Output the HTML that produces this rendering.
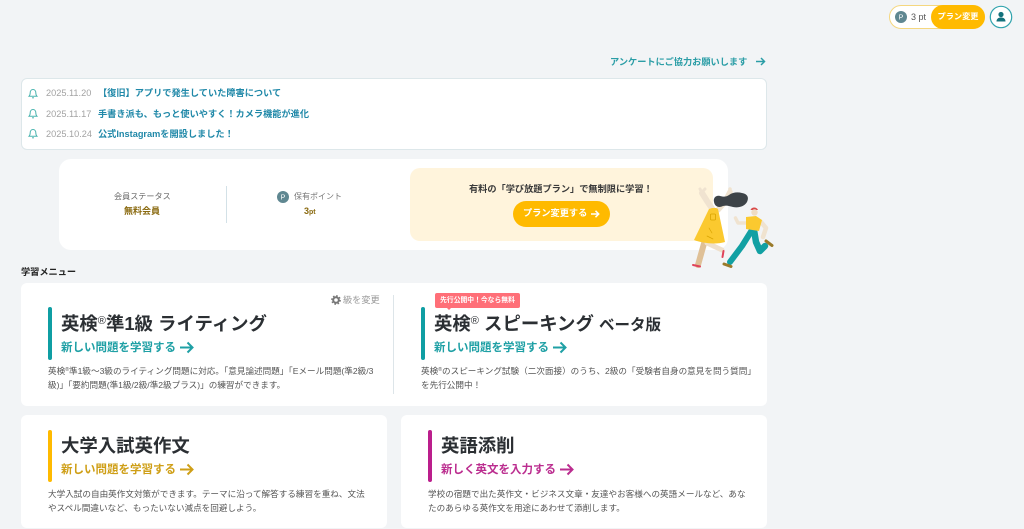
<!DOCTYPE html>
<html lang="ja"><head><meta charset="utf-8"><style>
*{box-sizing:border-box;margin:0;padding:0}
html,body{width:1024px;height:529px;overflow:hidden;background:#f2f4f6}
body{position:relative;font-family:"Liberation Sans","Noto Sans CJK JP",sans-serif;color:#333}
.a{position:absolute;white-space:nowrap}
.card{position:absolute;background:#fff;border-radius:6px}
.bar{position:absolute;width:4px;border-radius:2px}
.h{position:absolute;white-space:nowrap;font-size:18.4px;font-weight:700;color:#2b2f33;line-height:24px}
.l{position:absolute;white-space:nowrap;font-size:11.5px;font-weight:700;line-height:18px}
.d{position:absolute;white-space:nowrap;font-size:8.6px;line-height:14px;color:#555}
.dt{position:absolute;left:46px;font-size:9.2px;color:#a3a3a3;line-height:14px}
.nt{position:absolute;white-space:nowrap;font-size:9.2px;font-weight:700;color:#1f88a8;line-height:14px}
sup{font-size:.6em;line-height:0;vertical-align:.55em;font-weight:400}
svg{position:absolute;overflow:visible}
</style></head><body>

<!-- header -->
<div class="a" style="left:889px;top:5px;width:96px;height:24px;background:#fff;border:1px solid #f5d77f;border-radius:12px"></div>
<svg style="left:895px;top:11px" width="12" height="12"><circle cx="6" cy="6" r="6" fill="#5f8791"/><text x="6" y="8.5" font-size="7" fill="#fff" text-anchor="middle" font-family="Liberation Sans">P</text></svg>
<div class="a" style="left:911px;top:10px;font-size:9px;line-height:14px;color:#555">3 pt</div>
<div class="a" style="left:931px;top:5px;width:54px;height:24px;background:#ffba00;border-radius:12px;color:#fff;font-size:8.2px;font-weight:700;text-align:center;line-height:24px">プラン変更</div>
<svg style="left:989px;top:5px" width="24" height="24" viewBox="0 0 24 24"><circle cx="12" cy="12" r="10.7" fill="#fff" stroke="#2fa3ad" stroke-width="1.2"/><circle cx="12" cy="9.5" r="2.6" fill="#14727c"/><path d="M7.500 16.500c0-2.800 2-4 4.500-4s4.500 1.200 4.500 4z" fill="#14727c"/></svg>

<!-- survey -->
<div class="a" style="left:610px;top:54.500px;font-size:9.2px;font-weight:700;color:#2a9da6;line-height:15px">アンケートにご協力お願いします</div>
<svg style="left:755px;top:56px" width="11" height="11" viewBox="0 0 11 11" fill="none" stroke="#2a9da6" stroke-width="1.500"><path d="M1 5.500h8.500M6 2l3.500 3.500L6 9"/></svg>

<!-- notices -->
<div class="card" style="left:21px;top:78px;width:746px;height:72px;border:1px solid #dde7ea"></div>
<svg style="left:28px;top:88px" width="10" height="11" viewBox="0 0 10 11" fill="none" stroke="#4cb5b0" stroke-width="1"><path d="M1 8.300c1-1 1.200-1.800 1.200-3.500C2.200 3 3.300 1.500 5 1.500s2.800 1.500 2.800 3.300c0 1.700.2 2.500 1.200 3.500z"/><path d="M4 9.800h2"/></svg>
<svg style="left:28px;top:108px" width="10" height="11" viewBox="0 0 10 11" fill="none" stroke="#4cb5b0" stroke-width="1"><path d="M1 8.300c1-1 1.200-1.800 1.200-3.500C2.200 3 3.300 1.500 5 1.500s2.800 1.500 2.800 3.300c0 1.700.2 2.500 1.200 3.500z"/><path d="M4 9.800h2"/></svg>
<svg style="left:28px;top:128px" width="10" height="11" viewBox="0 0 10 11" fill="none" stroke="#4cb5b0" stroke-width="1"><path d="M1 8.300c1-1 1.200-1.800 1.200-3.500C2.200 3 3.300 1.500 5 1.500s2.800 1.500 2.800 3.300c0 1.700.2 2.500 1.200 3.500z"/><path d="M4 9.800h2"/></svg>
<div class="dt" style="top:86px">2025.11.20</div>
<div class="dt" style="top:106.500px">2025.11.17</div>
<div class="dt" style="top:127px">2025.10.24</div>
<div class="nt" style="left:98px;top:86px">【復旧】アプリで発生していた障害について</div>
<div class="nt" style="left:98px;top:106.500px">手書き派も、もっと使いやすく！カメラ機能が進化</div>
<div class="nt" style="left:98px;top:127px">公式Instagramを開設しました！</div>

<!-- status -->
<div class="card" style="left:59px;top:159px;width:669px;height:91px;border-radius:12px"></div>
<div class="a" style="left:114px;top:190px;font-size:8.1px;line-height:13px;color:#666">会員ステータス</div>
<div class="a" style="left:124px;top:204px;font-size:9px;font-weight:700;line-height:14px;color:#8a6a10">無料会員</div>
<div class="a" style="left:226px;top:186px;width:1px;height:37px;background:#d3e1e7"></div>
<svg style="left:277px;top:191px" width="12" height="12"><circle cx="6" cy="6" r="6" fill="#5f8791"/><text x="6" y="8.500" font-size="7" fill="#fff" text-anchor="middle" font-family="Liberation Sans">P</text></svg>
<div class="a" style="left:294px;top:190px;font-size:8px;line-height:13px;color:#777">保有ポイント</div>
<div class="a" style="left:304px;top:204px;font-size:9px;font-weight:700;line-height:14px;color:#8a6a10">3<span style="font-size:7px">pt</span></div>
<div class="a" style="left:410px;top:168px;width:303px;height:73px;background:#fff4dc;border-radius:10px"></div>
<div class="a" style="left:469px;top:182px;font-size:9.2px;font-weight:700;line-height:15px;color:#3a3a3a">有料の「学び放題プラン」で無制限に学習！</div>
<div class="a" style="left:513px;top:201px;width:97px;height:26px;background:#ffba00;border-radius:13px"></div>
<div class="a" style="left:523px;top:206px;font-size:9.2px;font-weight:700;line-height:15px;color:#fff">プラン変更する</div>
<svg style="left:590px;top:208.500px" width="10" height="10" viewBox="0 0 10 10" fill="none" stroke="#fff" stroke-width="1.500"><path d="M1 5h7.500M5.500 1.800L8.700 5 5.500 8.200"/></svg>

<!-- people -->
<svg style="left:680px;top:180px" width="100" height="95" viewBox="0 0 100 95" fill="none" stroke-linecap="round" stroke-linejoin="round">
<path d="M25 60L18 85" stroke="#dfc097" stroke-width="6"/>
<path d="M27 63L42 70" stroke="#efe0cc" stroke-width="5"/>
<path d="M13 85l7 1.500" stroke="#e0435a" stroke-width="2"/>
<path d="M43.500 71l-1 6" stroke="#e0435a" stroke-width="2"/>
<path d="M33 30L27 21 22 13" stroke="#f0e3d0" stroke-width="6"/>
<path d="M22 13L20 9M22 12L25 9" stroke="#f0e3d0" stroke-width="3"/>
<path d="M38 30L45 22 50 12" stroke="#f0e3d0" stroke-width="5.500"/>
<path d="M50 12v-3" stroke="#f0e3d0" stroke-width="3.500"/>
<path d="M34 22c-1-4 2-7 6-6 4 1 6 1 9-1 4-3 9-3 13-2 6 1 7 5 5 9-3 5-9 6-14 5-4-1-6-2-10-1-4 2-8 1-9-4z" fill="#3d4348"/>
<path d="M29 29L32 28 36 28 38 29 45 62C36 65 22 63 14 60z" fill="#fbc92f"/>
<rect x="30.500" y="34" width="5" height="6" rx="1" stroke="#d9a400" stroke-width=".8"/>
<path d="M29 48l3 5M27 56l6 3" stroke="#d9a400" stroke-width=".7"/>
<path d="M70.500 30c1-3 6-3.500 7.500 0z" fill="#d94a4a"/>
<circle cx="74.500" cy="32.500" r="3.200" fill="#efdcc4"/>
<path d="M72 50L62 66 50 82" stroke="#12a0a3" stroke-width="6"/>
<path d="M74 50L76 62 80 71 85 66" stroke="#12a0a3" stroke-width="6.500"/>
<path d="M67 43L58 43 55.500 38" stroke="#f0e3d0" stroke-width="3.500"/>
<path d="M81 42L86 48 83 57" stroke="#f0e3d0" stroke-width="4.500"/>
<path d="M66 37L76 36 82 40 79 51 66 49z" fill="#fbc92f"/>
<path d="M44 84l7 2.500" stroke="#9a7a2a" stroke-width="3"/>
<path d="M86 61l6 4.500" stroke="#9a7a2a" stroke-width="3"/>
</svg>

<!-- menu -->
<div class="a" style="left:21px;top:265px;font-size:9.2px;font-weight:700;line-height:15px;color:#222">学習メニュー</div>

<div class="card" style="left:21px;top:283px;width:746px;height:123px"></div>
<svg style="left:331px;top:295px" width="10" height="10" viewBox="0 0 10 10"><circle cx="5" cy="5" r="2.800" fill="none" stroke="#777" stroke-width="2"/><circle cx="5" cy="5" r="4.200" fill="none" stroke="#777" stroke-width="1.400" stroke-dasharray="1.600 1.700"/></svg>
<div class="a" style="left:343px;top:293px;font-size:9.2px;line-height:14px;color:#999">級を変更</div>
<div class="a" style="left:393px;top:295px;width:1px;height:99px;background:#dde5e9"></div>

<div class="bar" style="left:48px;top:307px;height:53px;background:#0f9ea3"></div>
<div class="h" style="left:61px;top:311.500px">英検<sup>®</sup>準1級 ライティング</div>
<div class="l" style="left:61px;top:339px;color:#1fa0a5">新しい問題を学習する</div>
<svg style="left:180px;top:341px" width="14" height="13" viewBox="0 0 14 13" fill="none" stroke="#1fa0a5" stroke-width="2"><path d="M0 6.500h12M7.500 1.500l5 5-5 5"/></svg>
<div class="d" style="left:48px;top:364px">英検<sup>®</sup>準1級〜3級のライティング問題に対応。「意見論述問題」「Eメール問題(準2級/3</div>
<div class="d" style="left:48px;top:378px">級)」「要約問題(準1級/2級/準2級プラス)」の練習ができます。</div>

<div class="a" style="left:435px;top:293px;width:85px;height:15px;background:#ff6f78;border-radius:2px;color:#fff;font-size:6.8px;font-weight:700;line-height:15px;text-align:center">先行公開中！今なら無料</div>
<div class="a" style="left:447px;top:308px;width:0;height:0;border-left:2.500px solid transparent;border-right:2.500px solid transparent;border-top:2.500px solid #ff6f78"></div>
<div class="bar" style="left:421px;top:307px;height:53px;background:#0f9ea3"></div>
<div class="h" style="left:434px;top:311.500px">英検<sup>®</sup> スピーキング <span style="font-size:15.5px">ベータ版</span></div>
<div class="l" style="left:434px;top:339px;color:#1fa0a5">新しい問題を学習する</div>
<svg style="left:553px;top:341px" width="14" height="13" viewBox="0 0 14 13" fill="none" stroke="#1fa0a5" stroke-width="2"><path d="M0 6.500h12M7.500 1.500l5 5-5 5"/></svg>
<div class="d" style="left:421px;top:364px">英検<sup>®</sup>のスピーキング試験（二次面接）のうち、2級の「受験者自身の意見を問う質問」</div>
<div class="d" style="left:421px;top:378px">を先行公開中！</div>

<div class="card" style="left:21px;top:415px;width:366px;height:113px"></div>
<div class="bar" style="left:48px;top:430px;height:52px;background:#ffba00"></div>
<div class="h" style="left:61px;top:433.500px">大学入試英作文</div>
<div class="l" style="left:61px;top:461px;color:#cf9f17">新しい問題を学習する</div>
<svg style="left:180px;top:463px" width="14" height="13" viewBox="0 0 14 13" fill="none" stroke="#cf9f17" stroke-width="2"><path d="M0 6.500h12M7.500 1.500l5 5-5 5"/></svg>
<div class="d" style="left:48px;top:487px">大学入試の自由英作文対策ができます。テーマに沿って解答する練習を重ね、文法</div>
<div class="d" style="left:48px;top:501px">やスペル間違いなど、もったいない減点を回避しよう。</div>

<div class="card" style="left:401px;top:415px;width:366px;height:113px"></div>
<div class="bar" style="left:428px;top:430px;height:52px;background:#bb1e8c"></div>
<div class="h" style="left:441px;top:433.500px">英語添削</div>
<div class="l" style="left:441px;top:461px;color:#bb2d8f">新しく英文を入力する</div>
<svg style="left:560px;top:463px" width="14" height="13" viewBox="0 0 14 13" fill="none" stroke="#bb2d8f" stroke-width="2"><path d="M0 6.500h12M7.500 1.500l5 5-5 5"/></svg>
<div class="d" style="left:428px;top:487px">学校の宿題で出た英作文・ビジネス文章・友達やお客様への英語メールなど、あな</div>
<div class="d" style="left:428px;top:501px">たのあらゆる英作文を用途にあわせて添削します。</div>

</body></html>
